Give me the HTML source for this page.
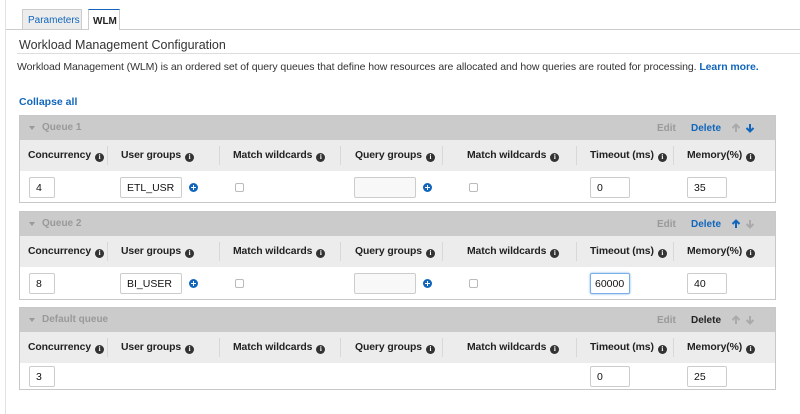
<!DOCTYPE html>
<html><head><style>
*{margin:0;padding:0;box-sizing:border-box}
body{width:800px;height:414px;background:#fff;font-family:"Liberation Sans",Arial,sans-serif;font-size:11px;color:#222;position:relative;overflow:hidden}
.a{position:absolute}
.q{position:absolute;left:19px;width:757px;border:1px solid #c8c8c8;background:#fff}
.qh{position:absolute;left:0;top:0;right:0;height:24px;background:#cbcbcb}
.qh .t{position:absolute;left:22px;top:6px;color:#999;font-weight:bold;font-size:10px}
.qh .tri{position:absolute;left:9px;top:10px;border-left:3px solid transparent;border-right:3px solid transparent;border-top:4px solid #999}
.ch{position:absolute;left:0;top:24px;right:0;height:31px;background:#ececec}
.ch span{position:absolute;top:10px;font-weight:bold;font-size:10.4px;color:#222;white-space:nowrap;letter-spacing:-0.1px}
.ch i{display:inline-block;width:9px;height:9px;border-radius:50%;background:#333;color:#fff;font-size:7px;font-style:normal;text-align:center;line-height:9px;vertical-align:-1px;margin-left:4px;font-family:"Liberation Serif",serif;font-weight:bold}
.sep{position:absolute;top:6px;width:1px;height:19px;background:#d8d8d8}
.in{position:absolute;height:21px;border:1px solid #ccc;border-radius:2px;background:#fff;font-size:10.5px;padding:4px 6px;color:#111}
.pl{position:absolute;width:9px;height:9px;border-radius:50%;background:#1166bb}
.pl:before{content:"";position:absolute;left:2px;top:4px;width:5px;height:1px;background:#fff}
.pl:after{content:"";position:absolute;left:4px;top:2px;width:1px;height:5px;background:#fff}
.cb{position:absolute;width:9px;height:9px;border:1px solid #bbb;border-radius:2px;background:#fff}
.ed{position:absolute;top:7px;font-size:10px;font-weight:bold;color:#999}
.de{position:absolute;top:7px;font-size:10px;font-weight:bold;color:#1166bb}
.ar{position:absolute;top:7px}
</style></head><body>
<div class="a" style="left:5px;top:0;width:1px;height:414px;background:#e2e2e2"></div>
<div class="a" style="left:6px;top:29px;width:794px;height:1px;background:#ccc"></div>
<div class="a" style="left:22px;top:9px;width:60px;height:20px;border:1px solid #ccc;border-bottom:none;background:#ececec;color:#1166bb;font-size:10px;padding:5px 0 0 5px">Parameters</div>
<div class="a" style="left:88px;top:9px;width:32px;height:21px;border:1px solid #ccc;border-top:1px solid #1166bb;border-bottom:none;background:#fff;font-weight:bold;font-size:10px;padding:6px 0 0 4px">WLM</div>
<div class="a" style="left:19px;top:38px;font-size:12.5px;color:#333">Workload Management Configuration</div>
<div class="a" style="left:17px;top:53px;width:783px;height:1px;background:#ddd"></div>
<div class="a" style="left:17px;top:61px;font-size:10.5px;color:#333;white-space:nowrap;letter-spacing:-0.08px">Workload Management (WLM) is an ordered set of query queues that define how resources are allocated and how queries are routed for processing. <b style="color:#1166bb">Learn more.</b></div>
<div class="a" style="left:19px;top:96px;font-weight:bold;color:#1166bb;font-size:10.5px">Collapse all</div>

<div class="q" style="top:115px;height:88px">
<div class="qh"><div class="tri"></div><div class="t">Queue 1</div><div class="ed" style="left:637px">Edit</div><div class="de" style="left:671px">Delete</div>
<svg class="ar" style="left:711px" width="10" height="10" viewBox="0 0 10 10"><path d="M5 9V2M1.5 5L5 1.5 8.5 5" stroke="#aaa" stroke-width="2" fill="none"/></svg>
<svg class="ar" style="left:725px" width="10" height="10" viewBox="0 0 10 10"><path d="M5 1v7M1.5 5L5 8.5 8.5 5" stroke="#1166bb" stroke-width="2" fill="none"/></svg></div>
<div class="ch"><span style="left:8px">Concurrency<i>i</i></span><div class="sep" style="left:87px"></div><span style="left:101px">User groups<i>i</i></span><div class="sep" style="left:199px"></div><span style="left:213px">Match wildcards<i>i</i></span><div class="sep" style="left:320px"></div><span style="left:335px">Query groups<i>i</i></span><div class="sep" style="left:422px"></div><span style="left:447px">Match wildcards<i>i</i></span><div class="sep" style="left:556px"></div><span style="left:570px">Timeout (ms)<i>i</i></span><div class="sep" style="left:653px"></div><span style="left:667px">Memory(%)<i>i</i></span></div>
<div class="in" style="left:9px;top:61px;width:26px">4</div>
<div class="in" style="left:100px;top:61px;width:62px">ETL_USR</div><div class="pl" style="left:169px;top:67px"></div>
<div class="cb" style="left:215px;top:67px"></div>
<div class="in" style="left:334px;top:61px;width:62px;background:#f8f8f8"></div><div class="pl" style="left:403px;top:67px"></div>
<div class="cb" style="left:449px;top:67px"></div>
<div class="in" style="left:570px;top:61px;width:40px">0</div>
<div class="in" style="left:667px;top:61px;width:40px">35</div>
</div>

<div class="q" style="top:211px;height:89px">
<div class="qh"><div class="tri"></div><div class="t">Queue 2</div><div class="ed" style="left:637px">Edit</div><div class="de" style="left:671px">Delete</div>
<svg class="ar" style="left:711px" width="10" height="10" viewBox="0 0 10 10"><path d="M5 9V2M1.5 5L5 1.5 8.5 5" stroke="#1166bb" stroke-width="2" fill="none"/></svg>
<svg class="ar" style="left:725px" width="10" height="10" viewBox="0 0 10 10"><path d="M5 1v7M1.5 5L5 8.5 8.5 5" stroke="#aaa" stroke-width="2" fill="none"/></svg></div>
<div class="ch"><span style="left:8px">Concurrency<i>i</i></span><div class="sep" style="left:87px"></div><span style="left:101px">User groups<i>i</i></span><div class="sep" style="left:199px"></div><span style="left:213px">Match wildcards<i>i</i></span><div class="sep" style="left:320px"></div><span style="left:335px">Query groups<i>i</i></span><div class="sep" style="left:422px"></div><span style="left:447px">Match wildcards<i>i</i></span><div class="sep" style="left:556px"></div><span style="left:570px">Timeout (ms)<i>i</i></span><div class="sep" style="left:653px"></div><span style="left:667px">Memory(%)<i>i</i></span></div>
<div class="in" style="left:9px;top:61px;width:26px">8</div>
<div class="in" style="left:100px;top:61px;width:62px">BI_USER</div><div class="pl" style="left:169px;top:67px"></div>
<div class="cb" style="left:215px;top:67px"></div>
<div class="in" style="left:334px;top:61px;width:62px;background:#f8f8f8"></div><div class="pl" style="left:403px;top:67px"></div>
<div class="cb" style="left:449px;top:67px"></div>
<div class="in" style="left:570px;top:61px;width:40px;border:1px solid #7aaee6;box-shadow:0 0 2px #7aaee6;padding:4px 4px">60000</div>
<div class="in" style="left:667px;top:61px;width:40px">40</div>
</div>

<div class="q" style="top:307px;height:83px">
<div class="qh"><div class="tri"></div><div class="t">Default queue</div><div class="ed" style="left:637px">Edit</div><div class="de" style="left:671px;color:#222">Delete</div>
<svg class="ar" style="left:711px" width="10" height="10" viewBox="0 0 10 10"><path d="M5 9V2M1.5 5L5 1.5 8.5 5" stroke="#aaa" stroke-width="2" fill="none"/></svg>
<svg class="ar" style="left:725px" width="10" height="10" viewBox="0 0 10 10"><path d="M5 1v7M1.5 5L5 8.5 8.5 5" stroke="#aaa" stroke-width="2" fill="none"/></svg></div>
<div class="ch"><span style="left:8px">Concurrency<i>i</i></span><div class="sep" style="left:87px"></div><span style="left:101px">User groups<i>i</i></span><div class="sep" style="left:199px"></div><span style="left:213px">Match wildcards<i>i</i></span><div class="sep" style="left:320px"></div><span style="left:335px">Query groups<i>i</i></span><div class="sep" style="left:422px"></div><span style="left:447px">Match wildcards<i>i</i></span><div class="sep" style="left:556px"></div><span style="left:570px">Timeout (ms)<i>i</i></span><div class="sep" style="left:653px"></div><span style="left:667px">Memory(%)<i>i</i></span></div>
<div class="in" style="left:9px;top:58px;width:26px">3</div>
<div class="in" style="left:570px;top:58px;width:40px">0</div>
<div class="in" style="left:667px;top:58px;width:40px">25</div>
</div>
</body></html>
